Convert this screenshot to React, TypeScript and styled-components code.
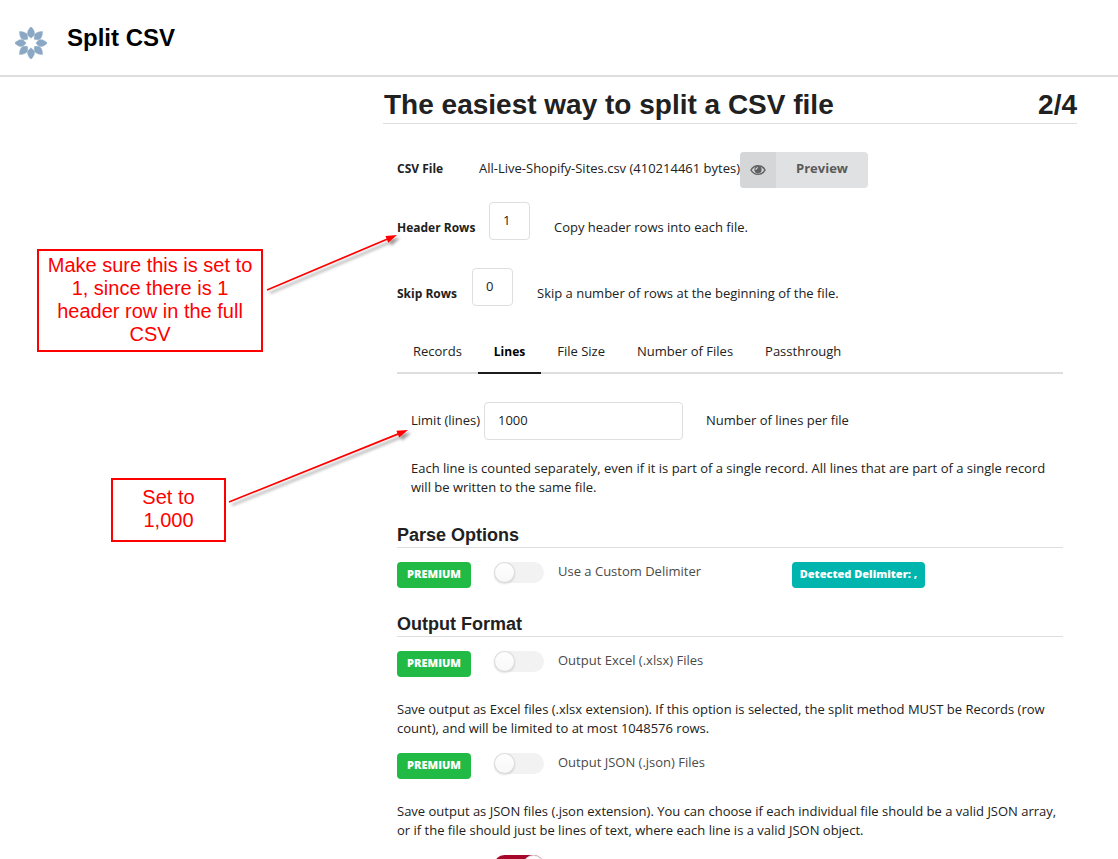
import React from "react";
import styled, { createGlobalStyle } from "styled-components";

const GlobalStyle = createGlobalStyle`
  html { scrollbar-width: none; }
  body {
    margin: 0;
    background: #fff;
    color: #212121;
    font: 13px/19px "Open Sans", "Noto Sans", sans-serif;
  }
  * { box-sizing: border-box; }
`;

const heading = `"Liberation Sans", Arial, sans-serif`;

const Page = styled.div`
  position: relative;
`;

const TopBar = styled.header`
  display: flex;
  align-items: flex-start;
  gap: 20px;
  height: 77px;
  padding: 24px 15px 0;
  border-bottom: 2px solid #dededf;
`;

const Logo = styled.svg`
  width: 32px;
  height: 32px;
  margin-top: 3px;
`;

const Brand = styled.div`
  font: bold 24px/28px ${heading};
  color: #000;
`;

const Main = styled.main`
  margin: 0 41px 0 383px;
  padding-top: 8px;
`;

const TitleRow = styled.div`
  display: flex;
  justify-content: space-between;
  padding-left: 1px;
  border-bottom: 1px solid #dededf;
`;

const Title = styled.h1`
  margin: 0;
  padding-top: 1px;
  font: bold 28px/37px ${heading};
`;

const Step = styled.span`
  padding-top: 1px;
  font: bold 28px/37px ${heading};
`;

const Form = styled.form`
  padding: 28px 14px 15px;
`;

const FileRow = styled.div`
  display: flex;
  align-items: center;
  height: 36px;
  margin-bottom: 14px;
`;

const FileLabel = styled.span`
  width: 82px;
  padding-bottom: 3px;
  font-size: 12px;
  font-weight: 700;
`;

const FileName = styled.span`
  width: 261px;
  padding-bottom: 3px;
  white-space: nowrap;
`;

const PreviewButton = styled.button`
  display: flex;
  width: 128px;
  height: 36px;
  padding: 0;
  overflow: hidden;
  border: 0;
  border-radius: 4px;
  background: #e0e1e2;
  color: #5a5a5a;
  font: inherit;
  font-weight: 700;
  line-height: 33px;
`;

const PreviewIcon = styled.span`
  display: grid;
  place-items: center;
  width: 36px;
  height: 36px;
  background: #d5d6d7;
`;

const PreviewText = styled.span`
  flex: 1;
`;

const RowField = styled.div`
  display: flex;
  align-items: flex-end;
  height: 38px;
  margin-bottom: 28px;
`;

const RowLabel = styled.label<{ $width: number }>`
  width: ${(p) => p.$width}px;
  padding-bottom: 3px;
  font-size: 12px;
  font-weight: 700;
  white-space: nowrap;
`;

const RowHint = styled.span`
  padding: 0 0 3px 24px;
`;

const TextInput = styled.input<{ $width: number }>`
  width: ${(p) => p.$width}px;
  height: 38px;
  padding: 0 13px 2px;
  border: 1px solid #dededf;
  border-radius: 4px;
  background: #fff;
  color: #212121;
  font: inherit;
`;

const Tabs = styled.div`
  display: flex;
  height: 44px;
  margin-top: -4px;
  border-bottom: 2px solid #dededf;
`;

const Tab = styled.button<{ $active?: boolean }>`
  height: 44px;
  padding: 0 16px;
  border: 0;
  border-bottom: 2px solid ${(p) => (p.$active ? "#1b1c1d" : "transparent")};
  background: none;
  color: ${(p) => (p.$active ? "#000" : "#212121")};
  font: inherit;
  font-size: ${(p) => (p.$active ? 12 : 13)}px;
  font-weight: ${(p) => (p.$active ? 700 : 400)};
  white-space: nowrap;
`;

const Pane = styled.div`
  padding: 28px 0 2px 14px;
`;

const LimitRow = styled.div`
  display: flex;
  align-items: center;
  margin-bottom: 19px;
`;

const LimitLabel = styled.label`
  width: 73px;
  padding-bottom: 2px;
  white-space: nowrap;
`;

const LimitHint = styled.span`
  padding: 0 0 2px 23px;
`;

const Text = styled.p`
  margin: 0;
`;

const Section = styled.h2`
  margin: 25px 0 14px;
  border-bottom: 1px solid #dededf;
  font: bold 18px/23px ${heading};
`;

const Option = styled.div`
  display: flex;
  align-items: flex-start;
  height: 26px;
`;

const OptionMain = styled.div`
  display: flex;
  align-items: flex-start;
  width: 395px;
`;

const Badge = styled.span<{ $color: string; $width: number }>`
  width: ${(p) => p.$width}px;
  height: 26px;
  border-radius: 4px;
  background: ${(p) => p.$color};
  color: #fff;
  font-size: 11px;
  font-weight: 800;
  line-height: 23px;
  text-align: center;
  white-space: nowrap;
`;

const SwitchLabel = styled.label`
  display: flex;
  gap: 14px;
  margin-left: 23px;
  color: #4a4a4a;
  white-space: nowrap;
`;

const Switch = styled.input`
  appearance: none;
  display: flex;
  width: 50px;
  height: 21px;
  margin: 0;
  border-radius: 11px;
  background: #f2f2f2;

  &::before {
    content: "";
    width: 21px;
    height: 21px;
    border-radius: 50%;
    background: linear-gradient(#fff, #f7f7f7);
    box-shadow: 0 1px 2px rgba(34, 36, 38, 0.15), inset 0 0 0 1px rgba(34, 36, 38, 0.15);
  }

  &:checked {
    justify-content: flex-end;
    background: #a5072b;
  }
`;

const OptionText = styled(Text)`
  margin: 23px 0 15px;
`;

const Callout = styled.aside<{ $left: number; $top: number; $width: number; $height: number }>`
  position: absolute;
  left: ${(p) => p.$left}px;
  top: ${(p) => p.$top}px;
  display: grid;
  place-content: center;
  width: ${(p) => p.$width}px;
  height: ${(p) => p.$height}px;
  padding-bottom: 2px;
  border: 2px solid #f00;
  background: #fff;
  color: #f00;
  font: 20px/23px ${heading};
  text-align: center;
`;

const Arrows = styled.svg`
  position: absolute;
  left: 0;
  top: 0;
  pointer-events: none;
`;

const petalAngles = [0, 45, 90, 135, 180, 225, 270, 315];

function Arrow({ x1, y1, x2, y2 }: { x1: number; y1: number; x2: number; y2: number }) {
  const angle = (Math.atan2(y2 - y1, x2 - x1) * 180) / Math.PI;
  const length = Math.hypot(x2 - x1, y2 - y1);
  return (
    <g filter="url(#arrow-shadow)">
      <g transform={`translate(${x1} ${y1}) rotate(${angle})`}>
        <path d={`M0 0H${length - 9}`} stroke="#f00" strokeWidth="1.7" />
        <path d={`M${length} 0l-11 -3.7v7.4z`} fill="#f00" />
      </g>
    </g>
  );
}

function PremiumOption({ id, label, children }: { id: string; label: string; children?: React.ReactNode }) {
  return (
    <Option>
      <OptionMain>
        <Badge $color="#21ba45" $width={74}>PREMIUM</Badge>
        <SwitchLabel htmlFor={id}>
          <Switch id={id} type="checkbox" />
          {label}
        </SwitchLabel>
      </OptionMain>
      {children}
    </Option>
  );
}

export default function App() {
  return (
    <Page>
      <GlobalStyle />
      <TopBar>
        <Logo viewBox="-16 -16 32 32" aria-hidden="true">
          {petalAngles.map((a) => (
            <path key={a} d="M0 -16.4C2 -14.4 3.6 -12 3.6 -9.6C3.6 -8 2 -6.4 0 -4.8C-2 -6.4 -3.6 -8 -3.6 -9.6C-3.6 -12 -2 -14.4 0 -16.4Z" fill="#8aa8c4" stroke="#8aa8c4" strokeWidth="0.3" transform={`rotate(${a})`} />
          ))}
        </Logo>
        <Brand>Split CSV</Brand>
      </TopBar>
      <Main>
        <TitleRow>
          <Title>The easiest way to split a CSV file</Title>
          <Step>2/4</Step>
        </TitleRow>
        <Form>
          <FileRow>
            <FileLabel>CSV File</FileLabel>
            <FileName>All-Live-Shopify-Sites.csv (410214461 bytes)</FileName>
            <PreviewButton type="button">
              <PreviewIcon>
                <svg width="16" height="12" viewBox="0 0 16 12" aria-hidden="true">
                  <path d="M1 6C4 0.2 12 0.2 15 6C12 11.8 4 11.8 1 6Z" fill="none" stroke="#5f6061" strokeWidth="1.5" />
                  <circle cx="8" cy="5.7" r="3.6" fill="#5f6061" />
                  <path d="M6 5.8A2 2 0 0 1 8 3.8" fill="none" stroke="#e0e1e2" strokeWidth="1.1" />
                </svg>
              </PreviewIcon>
              <PreviewText>Preview</PreviewText>
            </PreviewButton>
          </FileRow>
          <RowField>
            <RowLabel htmlFor="header-rows" $width={92}>Header Rows</RowLabel>
            <TextInput id="header-rows" $width={41} defaultValue="1" />
            <RowHint>Copy header rows into each file.</RowHint>
          </RowField>
          <RowField>
            <RowLabel htmlFor="skip-rows" $width={75}>Skip Rows</RowLabel>
            <TextInput id="skip-rows" $width={41} defaultValue="0" />
            <RowHint>Skip a number of rows at the beginning of the file.</RowHint>
          </RowField>
          <Tabs role="tablist">
            <Tab type="button" role="tab">Records</Tab>
            <Tab type="button" role="tab" aria-selected="true" $active>Lines</Tab>
            <Tab type="button" role="tab">File Size</Tab>
            <Tab type="button" role="tab">Number of Files</Tab>
            <Tab type="button" role="tab">Passthrough</Tab>
          </Tabs>
          <Pane>
            <LimitRow>
              <LimitLabel htmlFor="limit">Limit (lines)</LimitLabel>
              <TextInput id="limit" $width={199} defaultValue="1000" />
              <LimitHint>Number of lines per file</LimitHint>
            </LimitRow>
            <Text>
              Each line is counted separately, even if it is part of a single record. All lines that are
              part of a single record will be written to the same file.
            </Text>
          </Pane>
          <Section>Parse Options</Section>
          <PremiumOption id="delimiter" label="Use a Custom Delimiter">
            <Badge $color="#00b5ad" $width={133}>Detected Delimiter: ,</Badge>
          </PremiumOption>
          <Section>Output Format</Section>
          <PremiumOption id="xlsx" label="Output Excel (.xlsx) Files" />
          <OptionText>
            Save output as Excel files (.xlsx extension). If this option is selected, the split method
            MUST be Records (row count), and will be limited to at most 1048576 rows.
          </OptionText>
          <PremiumOption id="json" label="Output JSON (.json) Files" />
          <OptionText>
            Save output as JSON files (.json extension). You can choose if each individual file should
            be a valid JSON array, or if the file should just be lines of text, where each line is a
            valid JSON object.
          </OptionText>
          <Option>
            <Badge $color="transparent" $width={74} />
            <SwitchLabel>
              <Switch type="checkbox" defaultChecked aria-label="Enabled" />
            </SwitchLabel>
          </Option>
        </Form>
      </Main>
      <Callout $left={37} $top={249} $width={226} $height={103}>
        Make sure this is set to 1, since there is 1 header row in the full CSV
      </Callout>
      <Callout $left={111} $top={478} $width={115} $height={64}>
        Set to
        <br />
        1,000
      </Callout>
      <Arrows width="420" height="560" aria-hidden="true">
        <defs>
          <filter id="arrow-shadow" x="-10%" y="-10%" width="120%" height="130%">
            <feDropShadow dx="3" dy="3" stdDeviation="1.6" floodColor="#000" floodOpacity="0.4" />
          </filter>
        </defs>
        <Arrow x1={267} y1={290} x2={397} y2={235} />
        <Arrow x1={229} y1={502} x2={408} y2={430} />
      </Arrows>
    </Page>
  );
}
